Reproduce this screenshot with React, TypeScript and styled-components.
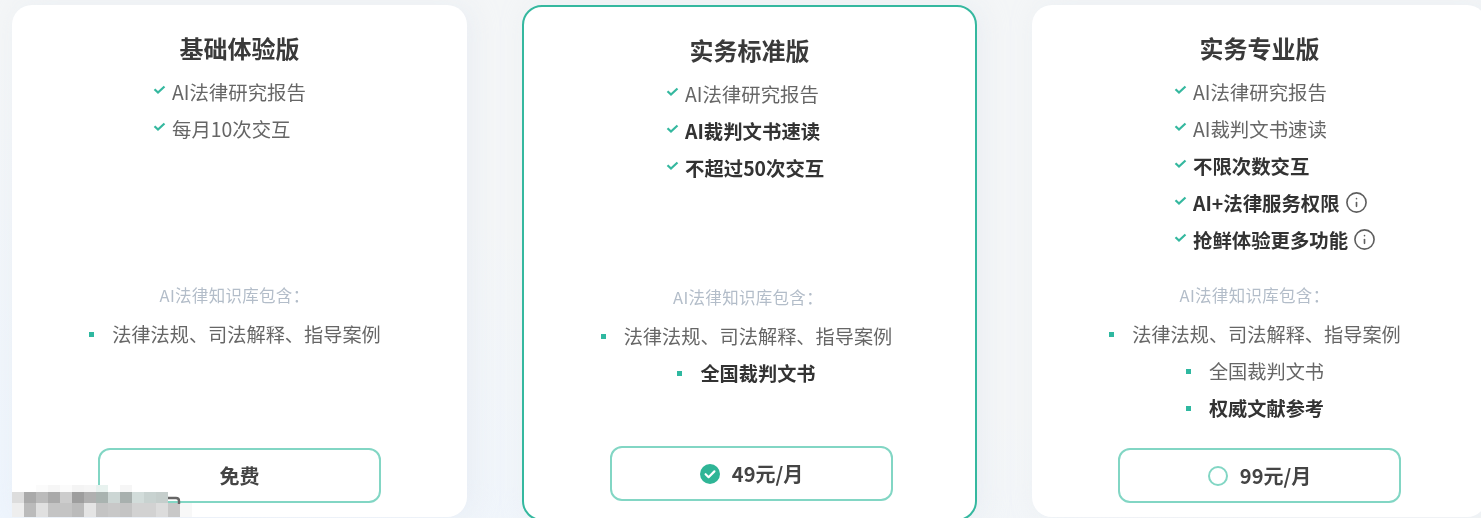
import React from "react";
import styled, { createGlobalStyle } from "styled-components";
import { Info } from "lucide-react";

const Global = createGlobalStyle`
  html, body { margin: 0; padding: 0; height: 518px; overflow: hidden; background: #f3f6f7; }
  * { box-sizing: border-box; }
`;

const Page = styled.main`
  position: relative;
  display: flex;
  gap: 55px;
  width: 1481px;
  height: 518px;
  padding: 5px 0 0 12px;
  overflow: hidden;
  background: linear-gradient(200deg, #f4f6f7 55%, #eef5fd 100%);
  font-family: "Noto Sans CJK SC", "Noto Sans", sans-serif;
  filter: blur(0.55px);
`;

const Card = styled.section<{ $active?: boolean }>`
  flex: 0 0 455px;
  display: flex;
  flex-direction: column;
  height: ${(p) => (p.$active ? "516px" : "512px")};
  padding: ${(p) => (p.$active ? "25px 0 18px" : "25px 0 14px")};
  background: #fff;
  border-radius: 20px;
  border: ${(p) => (p.$active ? "2px solid #35b89f" : "0")};
  box-shadow: 6px 0 24px rgba(226, 232, 240, 0.55);
`;

const Title = styled.h2`
  margin: 0;
  height: 36px;
  font-size: 24px;
  line-height: 36px;
  font-weight: 700;
  text-align: center;
  color: #3a3a3a;
`;

const Features = styled.ul<{ $indent: number }>`
  list-style: none;
  margin: 6.5px 0 0;
  padding: 0 0 0 ${(p) => p.$indent}px;
  height: 210px;
`;

const Feature = styled.li<{ $strong?: boolean }>`
  display: flex;
  align-items: center;
  height: 37px;
  font-size: 19.4px;
  font-weight: ${(p) => (p.$strong ? 700 : 400)};
  color: ${(p) => (p.$strong ? "#333" : "#666")};
  white-space: nowrap;
`;

const TickIcon = styled.svg`
  flex: none;
  width: 13px;
  height: 10px;
  margin-right: 6px;
  color: #35b89f;
  transform: translateY(-1px);
`;

const Tick = () => (
  <TickIcon viewBox="0 0 13 10">
    <path d="M1.5 4.2 5 7.6 11.5 1.5" fill="none" stroke="currentColor" strokeWidth="2.2" />
  </TickIcon>
);

const Hint = styled(Info)`
  flex: none;
  width: 23px;
  height: 23px;
  margin-left: 5px;
  color: #5e5e5e;
  stroke-width: 1.7;
`;

const Subhead = styled.div<{ $active?: boolean }>`
  height: 24px;
  padding-right: ${(p) => (p.$active ? 3 : 10)}px;
  font-size: 16.5px;
  letter-spacing: 0.3px;
  line-height: 24px;
  text-align: center;
  color: #b3bdc9;
`;

const Library = styled.ul<{ $active?: boolean }>`
  list-style: none;
  margin: 9px 0 0;
  padding: 0 ${(p) => (p.$active ? 6 : 9)}px 0 0;
`;

const LibraryRow = styled.li<{ $strong?: boolean }>`
  display: flex;
  align-items: center;
  justify-content: center;
  gap: 18px;
  height: 37px;
  font-size: 19.2px;
  font-weight: ${(p) => (p.$strong ? 700 : 400)};
  color: ${(p) => (p.$strong ? "#333" : "#666")};
  white-space: nowrap;
  &::before {
    content: "";
    width: 5px;
    height: 5px;
    background: #2fb8a0;
  }
`;

const PlanButton = styled.button`
  display: flex;
  align-items: center;
  justify-content: center;
  gap: 12px;
  flex: none;
  width: 283px;
  height: 55px;
  margin: auto 0 0 86px;
  padding: 0;
  background: #fff;
  border: 2px solid #82d6c4;
  border-radius: 12px;
  font-family: inherit;
  font-size: 20px;
  font-weight: 700;
  color: #444;
`;

const Mosaic = styled.div`
  position: absolute;
  left: 12px;
  bottom: 1px;
  display: grid;
  grid-template-columns: repeat(15, 12px);
  grid-template-rows: 7px 11px 14px;
`;

const Cell = styled.span<{ $c: string }>`
  background: ${(p) => p.$c};
`;

const Fragment = styled.svg`
  position: absolute;
  left: 166px;
  top: 494px;
  width: 16px;
  height: 14px;
`;

const SelectedMark = () => (
  <svg width="20" height="20" viewBox="0 0 20 20">
    <circle cx="10" cy="10" r="10" fill="#2fb596" />
    <path d="M5.6 10.2l3 3 5.8-5.8" fill="none" stroke="#fff" strokeWidth="2.2" strokeLinecap="round" strokeLinejoin="round" />
  </svg>
);

const EmptyMark = () => (
  <svg width="20" height="20" viewBox="0 0 20 20">
    <circle cx="10" cy="10" r="9" fill="none" stroke="#82d6c4" strokeWidth="2" />
  </svg>
);

const mosaic = [
  "transparent transparent #fbfbfb #f6f6f6 #fbfbfb #f4f4f4 #f6f6f6 #e8f2ef #fff #f6f6f6 transparent transparent transparent transparent transparent",
  "#dddddd #aaaaaa #bbbbbb #aaaaaa #cccccc #9e9e9e #b0b0b0 #a9b3b0 #ccd6d4 #a8b0ae #d2dcda #c8d2d0 #c5cecc transparent transparent",
  "#eeeeee #bbbbbb #e0e0e0 #c4c4c4 #c4c4c4 #bbbbbb #e4e4e4 #c4c4c4 #c8c8c8 #c4c4c4 #d2d2d2 #d2d2d2 #dcdcdc #c8c8c8 #f8f8f8",
].flatMap((r) => r.split(" "));

type Line = { text: string; strong?: boolean; hint?: boolean };
type Plan = {
  name: string;
  indent: number;
  active?: boolean;
  mark?: React.ReactNode;
  price: string;
  features: Line[];
  library: Line[];
};

const plans: Plan[] = [
  {
    name: "基础体验版",
    indent: 141,
    price: "免费",
    features: [{ text: "AI法律研究报告" }, { text: "每月10次交互" }],
    library: [{ text: "法律法规、司法解释、指导案例" }],
  },
  {
    name: "实务标准版",
    indent: 142,
    active: true,
    mark: <SelectedMark />,
    price: "49元/月",
    features: [
      { text: "AI法律研究报告" },
      { text: "AI裁判文书速读", strong: true },
      { text: "不超过50次交互", strong: true },
    ],
    library: [
      { text: "法律法规、司法解释、指导案例" },
      { text: "全国裁判文书", strong: true },
    ],
  },
  {
    name: "实务专业版",
    indent: 142,
    mark: <EmptyMark />,
    price: "99元/月",
    features: [
      { text: "AI法律研究报告" },
      { text: "AI裁判文书速读" },
      { text: "不限次数交互", strong: true },
      { text: "AI+法律服务权限", strong: true, hint: true },
      { text: "抢鲜体验更多功能", strong: true, hint: true },
    ],
    library: [
      { text: "法律法规、司法解释、指导案例" },
      { text: "全国裁判文书" },
      { text: "权威文献参考", strong: true },
    ],
  },
];

export default function App() {
  return (
    <Page>
      <Global />
      {plans.map((plan) => (
        <Card key={plan.name} $active={plan.active}>
          <Title>{plan.name}</Title>
          <Features $indent={plan.indent}>
            {plan.features.map((f) => (
              <Feature key={f.text} $strong={f.strong}>
                <Tick />
                {f.text}
                {f.hint && <Hint />}
              </Feature>
            ))}
          </Features>
          <Subhead $active={plan.active}>AI法律知识库包含：</Subhead>
          <Library $active={plan.active}>
            {plan.library.map((l) => (
              <LibraryRow key={l.text} $strong={l.strong}>
                {l.text}
              </LibraryRow>
            ))}
          </Library>
          <PlanButton>
            {plan.mark}
            {plan.price}
          </PlanButton>
        </Card>
      ))}
      <Mosaic>
        {mosaic.map((c, i) => (
          <Cell key={i} $c={c} />
        ))}
      </Mosaic>
      <Fragment viewBox="0 0 16 14">
        <path d="M2 4h8q3 0 3 3v3" fill="none" stroke="#666" strokeWidth="2.4" />
      </Fragment>
    </Page>
  );
}
